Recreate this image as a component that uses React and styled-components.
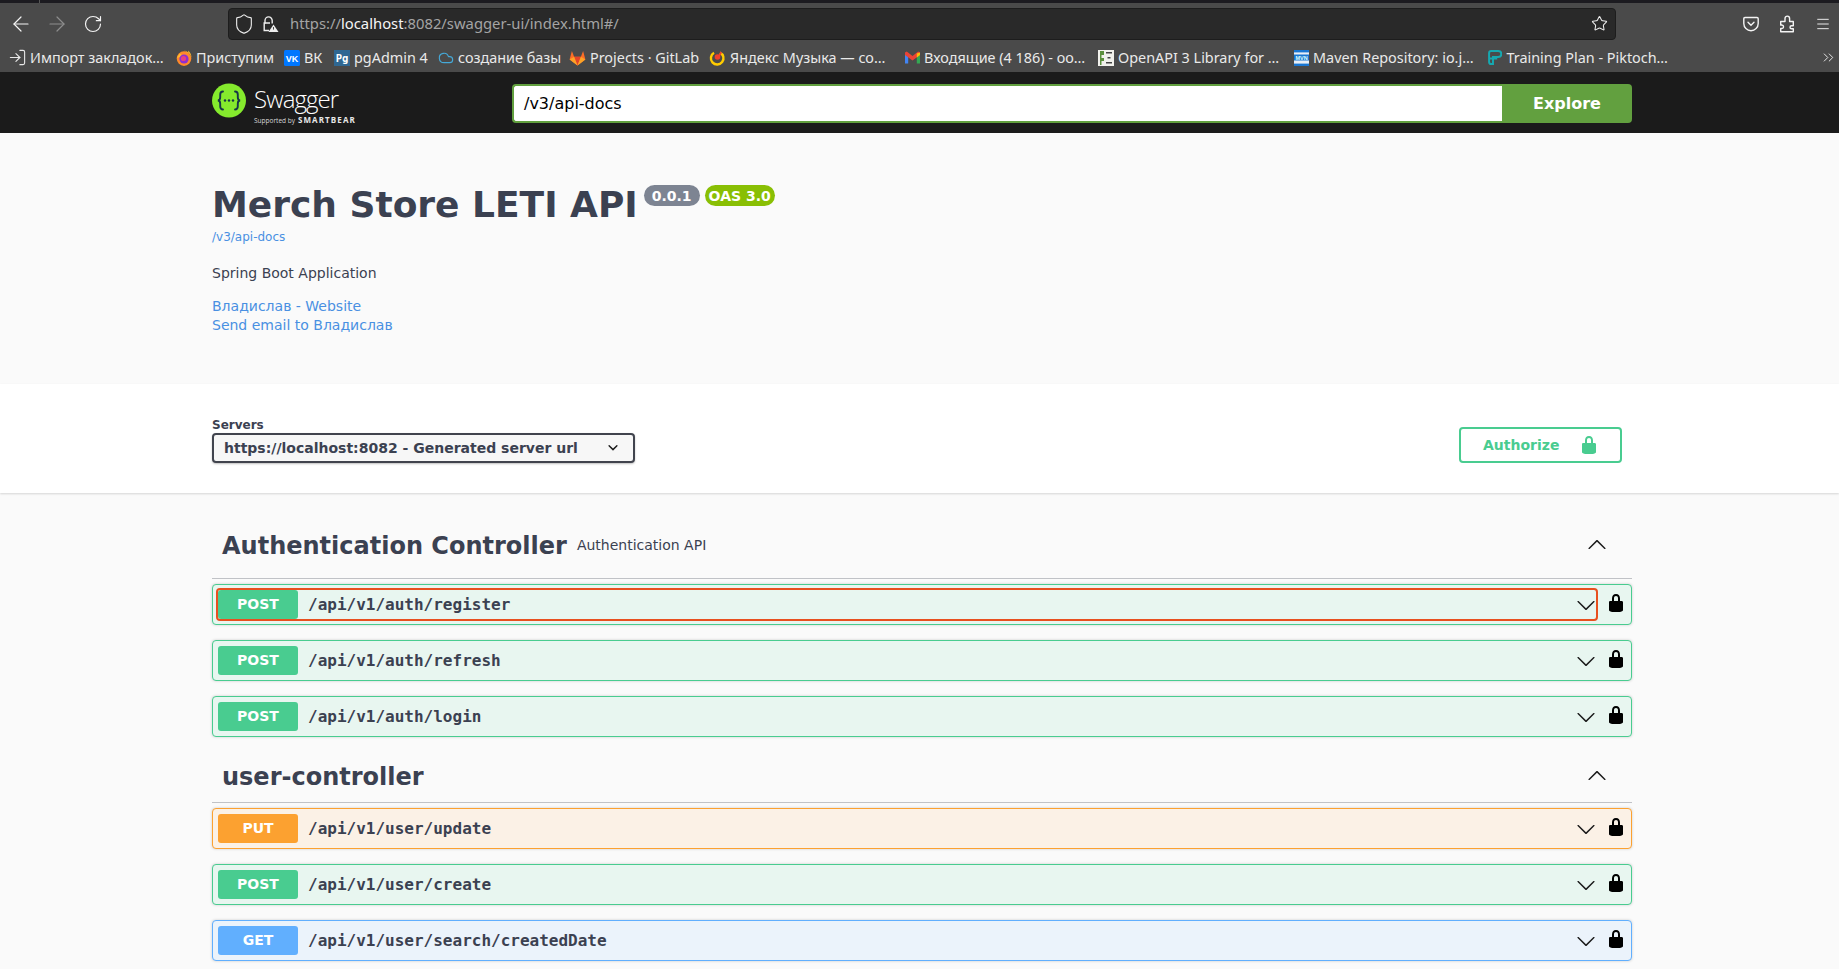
import styled, { createGlobalStyle } from "styled-components";
import { ArrowLeft, ArrowRight, RotateCw, Shield, Star, Menu, ChevronsRight, Cloud, LogIn } from "lucide-react";

const SANS = `"DejaVu Sans", sans-serif`;
const MONO = `"DejaVu Sans Mono", monospace`;
const CHROME = `"Noto Sans", "Open Sans", sans-serif`;

const METHODS = {
  POST: { main: "#49cc90", tint: "#e8f6f0" },
  PUT: { main: "#fca130", tint: "#fbf1e6" },
  GET: { main: "#61affe", tint: "#ebf3fb" },
};

const GlobalStyle = createGlobalStyle`
  html, body {
    margin: 0;
    height: 969px;
    overflow: hidden;
    background: #fafafa;
  }
`;

const TabStrip = styled.div`
  height: 3px;
  background: linear-gradient(to right, #1c1b20 39px, #555 39px, #555 40px, #1c1b20 40px);
`;

const BrowserBar = styled.div`
  height: 69px;
  background: #4a4a4a;
  font-family: ${CHROME};
  color: #f2f2f2;
`;

const Toolbar = styled.div`
  height: 40px;
  display: flex;
  align-items: center;
  padding-top: 1px;
  box-sizing: border-box;
`;

const NavGroup = styled.div`
  width: 228px;
  padding-left: 9px;
  box-sizing: border-box;
  display: flex;
  align-items: center;
  gap: 12px;
  flex-shrink: 0;
`;

const NavButton = styled.span`
  display: flex;
  margin-left: ${(p) => p.$shift || 0}px;
  color: ${(p) => (p.$off ? "#8d8d8d" : "#f4f4f4")};
`;

const UrlBar = styled.div`
  width: 1388px;
  height: 32px;
  box-sizing: border-box;
  flex-shrink: 0;
  display: flex;
  align-items: center;
  padding: 0 7px 0 4px;
  background: #292929;
  border: 1px solid #1d1d1d;
  border-radius: 4px;
  font-size: 14.8px;
  color: #a4a4a4;
`;

const UrlIcons = styled.div`
  display: flex;
  align-items: center;
  gap: 7px;
  width: 57px;
  flex-shrink: 0;
  color: #ededed;
`;

const UrlText = styled.span`
  flex: 1;
  padding-bottom: 2px;
  b {
    font-weight: 400;
    color: #f5f5f5;
  }
`;

const ToolIcons = styled.div`
  display: flex;
  align-items: center;
  gap: 20px;
  margin-left: 127px;
  color: #f4f4f4;
`;

const BookmarkBar = styled.div`
  height: 29px;
  display: flex;
  align-items: center;
  padding-left: 8px;
  font-size: 14.4px;
`;

const Bookmark = styled.div`
  width: ${(p) => p.$w}px;
  flex-shrink: 0;
  display: flex;
  align-items: center;
  gap: 4px;
  white-space: nowrap;
  overflow: hidden;
  color: #e9e9e9;
  span {
    padding-bottom: 1px;
  }
`;

const ImportIcon = styled(LogIn)`
  margin-right: -1px;
  flex-shrink: 0;
`;

const MoreBookmarks = styled.span`
  display: flex;
  margin-left: 152px;
  color: #f0f0f0;
`;

const Topbar = styled.header`
  height: 61px;
  padding-top: 11px;
  box-sizing: border-box;
  background: #1b1b1b;
`;

const TopbarInner = styled.div`
  width: 1420px;
  margin-left: 212px;
  display: flex;
  align-items: flex-start;
  justify-content: space-between;
`;

const Logo = styled.div`
  display: flex;
  align-items: flex-start;
  gap: 8px;
  color: #fff;
`;

const LogoText = styled.div`
  margin-top: 2px;
  display: flex;
  flex-direction: column;
  font-family: "Open Sans", sans-serif;
`;

const LogoName = styled.span`
  font-size: 24px;
  font-weight: 300;
  line-height: 28px;
  letter-spacing: -0.9px;
`;

const LogoSub = styled.span`
  margin-top: 2px;
  font-size: 6.5px;
  line-height: 9px;
  color: #d9d9d9;
  white-space: nowrap;
  b {
    font-size: 8px;
    letter-spacing: 1.1px;
    font-weight: 700;
    margin-left: 3px;
    color: #e8e8e8;
  }
`;

const SearchForm = styled.div`
  width: 1120px;
  height: 39px;
  margin-top: 1px;
  display: flex;
`;

const SearchInput = styled.div`
  flex: 1;
  box-sizing: border-box;
  background: #fff;
  border: 2px solid #62a03f;
  border-right: none;
  border-radius: 4px 0 0 4px;
  padding-left: 10px;
  display: flex;
  align-items: center;
  font: 400 16px ${SANS};
  color: #000;
`;

const ExploreButton = styled.div`
  width: 130px;
  display: flex;
  align-items: center;
  justify-content: center;
  background: #62a03f;
  border-radius: 0 4px 4px 0;
  font: 700 16px ${SANS};
  color: #fff;
`;

const Info = styled.section`
  height: 251px;
  padding: 49px 0 0 212px;
  box-sizing: border-box;
  background: #fafafa;
  font-family: ${SANS};
  color: #3b4151;
`;

const TitleRow = styled.div`
  display: flex;
  align-items: flex-start;
  height: 47px;
`;

const Title = styled.h2`
  margin: 0;
  font-size: 36px;
  line-height: 45px;
  font-weight: 700;
`;

const Badge = styled.span`
  margin: 3px 0 0 ${(p) => p.$gap}px;
  height: 21px;
  padding: 0 ${(p) => p.$pad}px;
  display: flex;
  align-items: center;
  border-radius: 57px;
  background: ${(p) => p.$bg};
  font-size: 14px;
  font-weight: 700;
  color: #fff;
`;

const BaseUrl = styled.a`
  display: block;
  font-size: 12px;
  line-height: 16px;
  color: #4990e2;
`;

const Description = styled.p`
  margin: 18px 0 0;
  font-size: 14px;
  line-height: 20px;
`;

const Contacts = styled.div`
  margin-top: 14px;
`;

const ContactLink = styled.a`
  display: block;
  font-size: 14px;
  line-height: 19px;
  color: #4990e2;
`;

const Schemes = styled.section`
  height: 109px;
  padding: 34px 217px 0 212px;
  box-sizing: border-box;
  display: flex;
  justify-content: space-between;
  align-items: flex-start;
  background: #fff;
  box-shadow: 0 1px 2px rgba(0, 0, 0, 0.15);
  font-family: ${SANS};
  position: relative;
`;

const ServerLabel = styled.div`
  font-size: 12px;
  line-height: 15px;
  font-weight: 700;
  color: #3b4151;
`;

const ServerSelect = styled.div`
  width: 423px;
  height: 30px;
  box-sizing: border-box;
  padding: 0 15px 0 10px;
  display: flex;
  align-items: center;
  justify-content: space-between;
  background: #f7f7f7;
  border: 2px solid #41444e;
  border-radius: 4px;
  box-shadow: 0 1px 2px rgba(0, 0, 0, 0.25);
  font-size: 14px;
  font-weight: 700;
  color: #3b4151;
`;

const AuthorizeButton = styled.div`
  width: 163px;
  height: 36px;
  margin-top: 9px;
  padding: 0 0 1px 22px;
  box-sizing: border-box;
  display: flex;
  align-items: center;
  gap: 20px;
  border: 2px solid #49cc90;
  border-radius: 4px;
  font-size: 14px;
  font-weight: 700;
  color: #49cc90;
`;

const Main = styled.main`
  width: 1420px;
  margin-left: 212px;
  padding-top: 27px;
  font-family: ${SANS};
  color: #3b4151;
`;

const TagHeader = styled.div`
  height: ${(p) => (p.$wide ? 59 : 51)}px;
  box-sizing: border-box;
  padding: 0 25px 0 10px;
  padding-bottom: ${(p) => (p.$wide ? 7 : 0)}px;
  margin-bottom: 5px;
  display: flex;
  align-items: center;
  border-bottom: 1px solid rgba(59, 65, 81, 0.3);
`;

const TagName = styled.h3`
  margin: 0;
  font-size: 24px;
  font-weight: 700;
`;

const TagNote = styled.small`
  margin-left: 10px;
  padding-bottom: 1px;
  font-size: 14px;
`;

const TagArrow = styled.span`
  margin: 0 0 2px auto;
  display: flex;
  color: #1b1b1b;
`;

const Row = styled.div`
  height: 41px;
  box-sizing: border-box;
  margin-bottom: 15px;
  padding-left: 5px;
  display: flex;
  align-items: center;
  background: ${(p) => METHODS[p.$method].tint};
  border: 1px solid ${(p) => METHODS[p.$method].main};
  border-radius: 4px;
  box-shadow: 0 0 3px rgba(0, 0, 0, 0.19);
`;

const RowControl = styled.div`
  flex: 1;
  display: flex;
  align-items: center;
  outline: ${(p) => (p.$focused ? "2px solid #e8501f" : "none")};
  outline-offset: 0;
  border-radius: 2px;
`;

const MethodTag = styled.span`
  width: 80px;
  height: 29px;
  padding-bottom: 1px;
  box-sizing: border-box;
  flex-shrink: 0;
  display: flex;
  align-items: center;
  justify-content: center;
  background: ${(p) => METHODS[p.$method].main};
  border-radius: 3px;
  font-size: 14px;
  font-weight: 700;
  color: #fff;
`;

const RowPath = styled.span`
  flex: 1;
  padding-left: 10px;
  font: 600 16px ${MONO};
  color: #3b4151;
`;

const RowArrow = styled.span`
  display: flex;
  color: #1b1b1b;
`;

const RowLock = styled.span`
  width: 30px;
  margin: -4px 0 0 5px;
  display: flex;
  justify-content: center;
  color: #000;
`;

const LockIcon = ({ size = 20 }) => (
  <svg width={size} height={size} viewBox="0 0 20 20" fill="currentColor">
    <path d="M15.8 8H14V5.6C14 2.703 12.665 1 10 1 7.334 1 6 2.703 6 5.6V8H4c-.553 0-1 .646-1 1.199V17c0 .549.428 1.139.951 1.307l1.197.387C5.672 18.861 6.55 19 7.1 19h5.8c.549 0 1.428-.139 1.951-.307l1.196-.387c.524-.167.953-.757.953-1.306V9.199C17 8.646 16.352 8 15.8 8zM12 8H8V5.199C8 3.754 8.797 3 10 3c1.203 0 2 .754 2 2.199V8z" />
  </svg>
);

const ArrowDown = ({ up }) => (
  <svg width="20" height="20" viewBox="0 0 20 20" fill="currentColor" style={up ? { transform: "rotate(180deg)" } : undefined}>
    <path d="M17.418 6.109c.272-.268.709-.268.979 0s.271.701 0 .969l-7.908 7.83c-.27.268-.707.268-.979 0l-7.908-7.83c-.27-.268-.27-.701 0-.969.271-.268.709-.268.979 0L10 13.25l7.418-7.141z" />
  </svg>
);

const SiteLock = () => (
  <svg width="17" height="18" viewBox="0 0 17 18" fill="none" stroke="#ededed" strokeWidth="1.4">
    <path d="M3 8.500V5.500a3.600 3.600 0 0 1 7.200 0v3" />
    <path d="M8 8H2.200v7.500H7" />
    <path d="M11.500 9.500 16.500 17h-10z" fill="#ededed" stroke="none" />
    <path d="M11.500 12v2.600" stroke="#4a4a4a" strokeWidth="1" />
  </svg>
);

const PocketIcon = () => (
  <svg width="16" height="16" viewBox="0 0 16 16" fill="none" stroke="currentColor" strokeWidth="1.4">
    <path d="M2 1.500h12A1.200 1.200 0 0 1 15.200 2.700V7.500a7.200 7.200 0 0 1-14.400 0V2.700A1.200 1.200 0 0 1 2 1.500z" />
    <path d="M5 6.200 8 9.200l3-3" strokeLinecap="round" />
  </svg>
);

const ExtensionIcon = () => (
  <svg width="16" height="18" viewBox="0 0 16 18" fill="none" stroke="currentColor" strokeWidth="1.4" strokeLinejoin="round">
    <path d="M1.700 6.500H6V3.400a2.300 2.300 0 0 1 4.600 0V6.500h3.700v4.200h-1.800a1.500 1.500 0 0 0 0 3h1.800v3.100H1.700v-3.300c1.900.3 2.800-.5 2.800-1.700s-.9-2-2.800-1.700z" />
  </svg>
);

const FirefoxIcon = () => (
  <svg width="16" height="16" viewBox="0 0 16 16">
    <circle cx="8" cy="8.600" r="7.300" fill="#ff8a2a" />
    <path d="M8 .5c3 .6 7 3.500 7.500 7.500.2-2.600-1.300-6-3.500-7.500.4 1.400.2 2-.3 2.600C10.800 1.900 9.600.9 8 .5z" fill="#ffbd2e" />
    <path d="M.8 8c1-1 1.600-3 3-4.500L7 6z" fill="#ffbd2e" />
    <circle cx="8" cy="9" r="4.600" fill="#8f2fd0" />
    <circle cx="7.500" cy="8.500" r="2.600" fill="#e8417f" />
  </svg>
);

const VkIcon = () => (
  <svg width="16" height="16" viewBox="0 0 16 16">
    <rect width="16" height="16" rx="1.500" fill="#0077ff" />
    <text x="8" y="11.500" textAnchor="middle" fontSize="9" fontWeight="700" fontFamily="Liberation Sans" fill="#fff">VK</text>
  </svg>
);

const PgIcon = () => (
  <svg width="16" height="16" viewBox="0 0 16 16">
    <rect width="16" height="16" fill="#2f6792" />
    <text x="8" y="12" textAnchor="middle" fontSize="10.500" fontWeight="700" fontFamily="DejaVu Sans Mono" fill="#fff">Pg</text>
  </svg>
);

const GitlabIcon = () => (
  <svg width="17" height="16" viewBox="0 0 17 16">
    <path d="M8.500 15.500.6 9.600 2.900 1l2.200 5.800h6.800L14.100 1l2.300 8.600z" fill="#fc6d26" />
    <path d="M8.500 15.500 5.100 6.800h6.800z" fill="#e24329" />
    <path d="M8.500 15.500.6 9.600l4.500-2.800zM8.500 15.500l7.900-5.900-4.500-2.800z" fill="#fca326" />
  </svg>
);

const YandexIcon = () => (
  <svg width="17" height="16" viewBox="0 0 17 16">
    <path d="M11 2.600a6.300 6.300 0 1 1-6 .2" fill="none" stroke="#ffcc00" strokeWidth="2.400" />
    <circle cx="8.500" cy="7" r="2.800" fill="#f0402b" />
    <path d="M9 6 11.500 1.500 13 2.400 10.500 7z" fill="#f0402b" />
  </svg>
);

const GmailIcon = () => (
  <svg width="15" height="13" viewBox="0 0 15 13">
    <path d="M0 1.500V12.500h3.200V5z" fill="#4285f4" />
    <path d="M15 1.500V12.500h-3.200V5z" fill="#34a853" />
    <path d="M0 1.500 1.800.5 7.500 5 13.200.5 15 1.500V4L7.500 9.500 0 4z" fill="#ea4335" />
    <path d="M11.800 2.500 15 1.500V4l-3.200 2.400z" fill="#fbbc04" />
  </svg>
);

const LibraryIcon = () => (
  <svg width="16" height="16" viewBox="0 0 16 16">
    <rect width="16" height="16" fill="#f1f1ec" />
    <path d="M2 1h4v4H3.500v3H6v3H3.500v4H2z" fill="#5a8f3c" />
    <rect x="8" y="2" width="6" height="1.500" fill="#444" />
    <rect x="9.500" y="7" width="3" height="1.500" fill="#444" />
    <rect x="8" y="12" width="6" height="1.500" fill="#444" />
  </svg>
);

const MavenIcon = () => (
  <svg width="15" height="16" viewBox="0 0 15 16">
    <rect width="15" height="16" fill="#e8eef6" />
    <rect width="15" height="2.400" fill="#1976d2" />
    <rect y="13.600" width="15" height="2.400" fill="#1976d2" />
    <rect y="4.500" width="15" height="6" fill="#1976d2" />
    <text x="7.500" y="9.500" textAnchor="middle" fontSize="5.500" fontWeight="700" fontFamily="Liberation Sans" fill="#dff">MVN</text>
  </svg>
);

const PiktoIcon = () => (
  <svg width="16" height="17" viewBox="0 0 16 17" fill="none" stroke="#16a8b0" strokeWidth="2.200">
    <path d="M1.200 9.500V3.500A2.300 2.300 0 0 1 3.500 1.200h7.800a3.300 3.300 0 0 1 0 6.800H5.500v7.800H3.500a2.300 2.300 0 0 1-2.300-2.300V9.500h9" />
  </svg>
);

const BOOKMARKS = [
  { w: 168, icon: <ImportIcon size={19} strokeWidth={1.4} />, label: "Импорт закладок…" },
  { w: 108, icon: <FirefoxIcon />, label: "Приступим" },
  { w: 50, icon: <VkIcon />, label: "ВК" },
  { w: 104, icon: <PgIcon />, label: "pgAdmin 4" },
  { w: 131, icon: <Cloud size={16} color="#45a9d8" strokeWidth={1.7} />, label: "создание базы" },
  { w: 140, icon: <GitlabIcon />, label: "Projects · GitLab" },
  { w: 196, icon: <YandexIcon />, label: "Яндекс Музыка — со…" },
  { w: 193, icon: <GmailIcon />, label: "Входящие (4 186) - оо…" },
  { w: 196, icon: <LibraryIcon />, label: "OpenAPI 3 Library for …" },
  { w: 194, icon: <MavenIcon />, label: "Maven Repository: io.j…" },
  { w: 180, icon: <PiktoIcon />, label: "Training Plan - Piktoch…" },
];

const TAGS = [
  {
    name: "Authentication Controller",
    note: "Authentication API",
    rows: [
      { method: "POST", path: "/api/v1/auth/register", focused: true },
      { method: "POST", path: "/api/v1/auth/refresh" },
      { method: "POST", path: "/api/v1/auth/login" },
    ],
  },
  {
    name: "user-controller",
    rows: [
      { method: "PUT", path: "/api/v1/user/update" },
      { method: "POST", path: "/api/v1/user/create" },
      { method: "GET", path: "/api/v1/user/search/createdDate" },
    ],
  },
];

const Browser = () => (
  <>
    <TabStrip />
    <BrowserBar>
      <Toolbar>
        <NavGroup>
          <NavButton><ArrowLeft size={24} strokeWidth={1.2} /></NavButton>
          <NavButton $off><ArrowRight size={24} strokeWidth={1.2} /></NavButton>
          <NavButton $shift={2}><RotateCw size={20} strokeWidth={1.4} /></NavButton>
        </NavGroup>
        <UrlBar>
          <UrlIcons>
            <Shield size={22} strokeWidth={1.2} />
            <SiteLock />
          </UrlIcons>
          <UrlText>https://<b>localhost</b>:8082/swagger-ui/index.html#/</UrlText>
          <Star size={17} strokeWidth={1.5} color="#ededed" />
        </UrlBar>
        <ToolIcons>
          <PocketIcon />
          <ExtensionIcon />
          <Menu size={16} strokeWidth={1.4} />
        </ToolIcons>
      </Toolbar>
      <BookmarkBar>
        {BOOKMARKS.map((b) => (
          <Bookmark key={b.label} $w={b.w}>
            {b.icon}
            <span>{b.label}</span>
          </Bookmark>
        ))}
        <MoreBookmarks><ChevronsRight size={17} strokeWidth={1.3} /></MoreBookmarks>
      </BookmarkBar>
    </BrowserBar>
  </>
);

const SwaggerLogo = () => (
  <Logo>
    <svg width="34" height="35" viewBox="0 0 34 34">
      <circle cx="17" cy="17" r="17" fill="#85ea2d" />
      <g fill="none" stroke="#173647" strokeWidth="1.900" strokeLinecap="round">
        <path d="M11 8c-2.500 0-2.800 1.300-2.800 3.200v2.600c0 1.700-.8 3.200-2.400 3.200 1.600 0 2.400 1.500 2.400 3.200v2.600c0 1.900.3 3.200 2.800 3.200" />
        <path d="M23 8c2.500 0 2.800 1.300 2.800 3.200v2.600c0 1.700.8 3.200 2.400 3.200-1.600 0-2.400 1.500-2.400 3.200v2.600c0 1.900-.3 3.200-2.800 3.200" />
      </g>
      <g fill="#173647">
        <circle cx="13" cy="17" r="1.200" />
        <circle cx="17" cy="17" r="1.200" />
        <circle cx="21" cy="17" r="1.200" />
      </g>
    </svg>
    <LogoText>
      <LogoName>Swagger</LogoName>
      <LogoSub>Supported by<b>SMARTBEAR</b></LogoSub>
    </LogoText>
  </Logo>
);

const App = () => (
  <>
    <GlobalStyle />
    <Browser />
    <Topbar>
      <TopbarInner>
        <SwaggerLogo />
        <SearchForm>
          <SearchInput>/v3/api-docs</SearchInput>
          <ExploreButton>Explore</ExploreButton>
        </SearchForm>
      </TopbarInner>
    </Topbar>
    <Info>
      <TitleRow>
        <Title>Merch Store LETI API</Title>
        <Badge $bg="#7d8492" $gap={6} $pad={8}>0.0.1</Badge>
        <Badge $bg="#89bf04" $gap={5} $pad={4}>OAS 3.0</Badge>
      </TitleRow>
      <BaseUrl>/v3/api-docs</BaseUrl>
      <Description>Spring Boot Application</Description>
      <Contacts>
        <ContactLink>Владислав - Website</ContactLink>
        <ContactLink>Send email to Владислав</ContactLink>
      </Contacts>
    </Info>
    <Schemes>
      <div>
        <ServerLabel>Servers</ServerLabel>
        <ServerSelect>
          https://localhost:8082 - Generated server url
          <svg width="10" height="10" viewBox="0 0 20 20" fill="#1b1b1b">
            <path d="M13.418 7.859a.695.695 0 0 1 .978 0 .68.68 0 0 1 0 .969l-3.908 3.83a.697.697 0 0 1-.979 0l-3.908-3.83a.68.68 0 0 1 0-.969.695.695 0 0 1 .978 0L10 11l3.418-3.141z" transform="translate(-10 -11) scale(2)" />
          </svg>
        </ServerSelect>
      </div>
      <AuthorizeButton>
        Authorize
        <LockIcon />
      </AuthorizeButton>
    </Schemes>
    <Main>
      {TAGS.map((tag) => (
        <section key={tag.name}>
          <TagHeader $wide={Boolean(tag.note)}>
            <TagName>{tag.name}</TagName>
            {tag.note && <TagNote>{tag.note}</TagNote>}
            <TagArrow><ArrowDown up /></TagArrow>
          </TagHeader>
          {tag.rows.map((row) => (
            <Row key={row.path} $method={row.method}>
              <RowControl $focused={row.focused}>
                <MethodTag $method={row.method}>{row.method}</MethodTag>
                <RowPath>{row.path}</RowPath>
                <RowArrow><ArrowDown /></RowArrow>
              </RowControl>
              <RowLock><LockIcon /></RowLock>
            </Row>
          ))}
        </section>
      ))}
    </Main>
  </>
);

export default App;
